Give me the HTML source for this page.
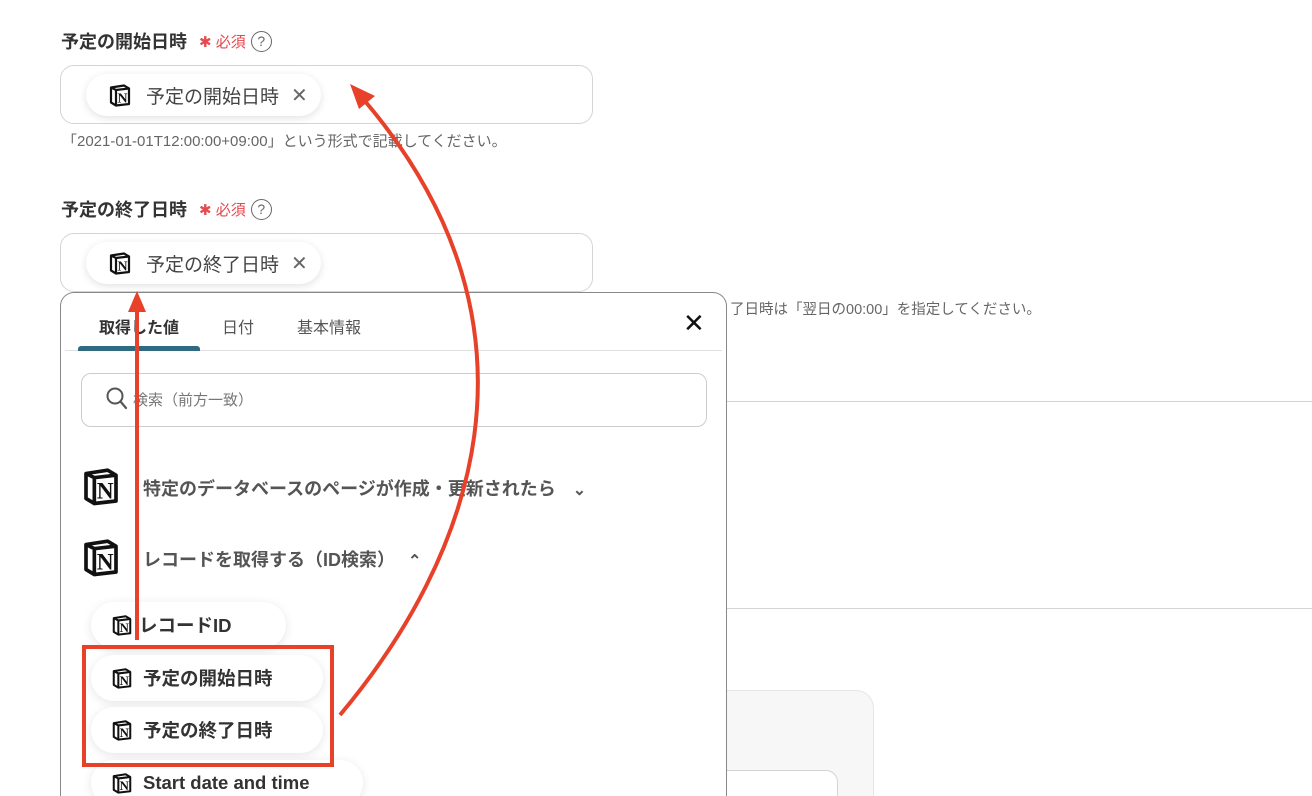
<!DOCTYPE html>
<html><head><meta charset="utf-8"><style>
*{box-sizing:border-box;margin:0;padding:0}
html,body{width:1312px;height:796px;overflow:hidden}
body{background:#fff;font-family:"Liberation Sans","Noto Sans CJK JP",sans-serif;color:#333;position:relative}
.abs{position:absolute}
.lbl{font-size:18px;font-weight:bold;color:#333;display:flex;align-items:center}
.req{color:#e5484d;font-size:15px;font-weight:normal;margin-left:12px}
.q{width:21px;height:21px;border:1.5px solid #666;border-radius:50%;font-size:14px;color:#666;display:inline-flex;align-items:center;justify-content:center;margin-left:5px;font-weight:normal}
.inp{border:1px solid #d4d4d8;border-radius:14px;background:#fff}
.chip{border-radius:22px;background:#fff;box-shadow:0 2px 8px rgba(0,0,0,.12);display:flex;align-items:center;font-size:19px;color:#444}
.help{font-size:15px;color:#666;white-space:nowrap}
.pill{border-radius:24px;background:#fff;box-shadow:0 2px 10px rgba(0,0,0,.10);display:flex;align-items:center;font-size:18.5px;font-weight:bold;color:#333;padding-left:20px}
.x{font-size:20px;color:#666;font-weight:normal}
</style></head><body>
<svg width="0" height="0" style="position:absolute"><defs>
<symbol id="n" viewBox="0 0 24 24"><path d="M3 4.5 L16 2.5 L21 5.5 L21 21 L8 22.5 L3 19.5 Z" fill="#fff" stroke="#111" stroke-width="2.2" stroke-linejoin="round"/><path d="M3 4.5 L8 7 L21 5.5 M8 7 L8 22.5" fill="none" stroke="#111" stroke-width="2.2"/><text x="14.5" y="19.5" font-family="Liberation Serif,serif" font-weight="bold" font-size="14" text-anchor="middle" fill="#111">N</text></symbol>
</defs></svg>

<div class="abs lbl" style="left:61px;top:29px;height:24px">予定の開始日時<span class="req">✱ 必須</span><span class="q">?</span></div>
<div class="abs inp" style="left:60px;top:65px;width:533px;height:59px"></div>
<div class="abs chip" style="left:86px;top:74px;width:235px;height:42px;padding-left:22px"><svg width="24" height="24"><use href="#n"/></svg><span style="margin-left:14px">予定の開始日時</span><span class="x" style="margin-left:12px">✕</span></div>
<div class="abs help" style="left:62px;top:130px">「2021-01-01T12:00:00+09:00」という形式で記載してください。</div>

<div class="abs lbl" style="left:61px;top:197px;height:24px">予定の終了日時<span class="req">✱ 必須</span><span class="q">?</span></div>
<div class="abs inp" style="left:60px;top:233px;width:533px;height:59px"></div>
<div class="abs chip" style="left:86px;top:242px;width:235px;height:42px;padding-left:22px"><svg width="24" height="24"><use href="#n"/></svg><span style="margin-left:14px">予定の終了日時</span><span class="x" style="margin-left:12px">✕</span></div>
<div class="abs help" style="left:730px;top:298px;font-size:14.5px">了日時は「翌日の00:00」を指定してください。</div>

<div class="abs" style="left:726px;top:401px;width:586px;height:1px;background:#d4d4d8"></div>
<div class="abs" style="left:726px;top:608px;width:586px;height:1px;background:#d4d4d8"></div>
<div class="abs" style="left:700px;top:690px;width:174px;height:106px;background:#f7f7f8;border:1px solid #e6e6ea;border-bottom:none;border-radius:18px 18px 0 0"></div>
<div class="abs" style="left:700px;top:770px;width:138px;height:26px;background:#fff;border:1px solid #d4d4d8;border-bottom:none;border-radius:12px 12px 0 0"></div>

<!-- panel -->
<div class="abs" style="left:60px;top:292px;width:667px;height:504px;background:#fff;border:1px solid #888;border-bottom:none;border-radius:14px 14px 0 0;overflow:hidden">
 <div class="abs" style="left:38px;top:21px;font-size:16px;font-weight:bold;color:#333">取得した値</div>
 <div class="abs" style="left:161px;top:21px;font-size:16px;color:#555">日付</div>
 <div class="abs" style="left:236px;top:21px;font-size:16px;color:#555">基本情報</div>
 <div class="abs" style="left:622px;top:16px;font-size:26px;color:#111;line-height:28px">✕</div>
 <div class="abs" style="left:4px;top:57px;width:657px;height:1px;background:#e0e0e0"></div>
 <div class="abs" style="left:17px;top:53px;width:122px;height:5px;background:#2f6a80;border-radius:3px 3px 0 0"></div>
 <div class="abs" style="left:20px;top:80px;width:626px;height:54px;border:1px solid #ccc;border-radius:10px"></div>
 <svg class="abs" style="left:44px;top:93px" width="24" height="26"><circle cx="10" cy="10" r="7.5" fill="none" stroke="#555" stroke-width="2"/><path d="M15.5 15.5 L21 22" stroke="#555" stroke-width="2.2" stroke-linecap="round"/></svg>
 <div class="abs" style="left:72px;top:96px;font-size:15px;color:#777">検索（前方一致）</div>
 <svg class="abs" style="left:20px;top:173px" width="40" height="40" viewBox="0 0 24 24"><use href="#n"/></svg>
 <div class="abs" style="left:82px;top:182px;font-size:18px;font-weight:bold;color:#555">特定のデータベースのページが作成・更新されたら <span style="font-size:16px;margin-left:12px">⌄</span></div>
 <svg class="abs" style="left:20px;top:244px" width="40" height="40" viewBox="0 0 24 24"><use href="#n"/></svg>
 <div class="abs" style="left:82px;top:253px;font-size:18px;font-weight:bold;color:#555">レコードを取得する（ID検索） <span style="font-size:16px;margin-left:8px">⌃</span></div>
 <div class="abs pill" style="left:30px;top:309px;width:195px;height:46px"><svg width="22" height="24"><use href="#n"/></svg><span style="margin-left:6px">レコードID</span></div>
 <div class="abs pill" style="left:30px;top:362px;width:232px;height:46px"><svg width="22" height="24"><use href="#n"/></svg><span style="margin-left:10px">予定の開始日時</span></div>
 <div class="abs pill" style="left:30px;top:414px;width:232px;height:46px"><svg width="22" height="24"><use href="#n"/></svg><span style="margin-left:10px">予定の終了日時</span></div>
 <div class="abs pill" style="left:30px;top:467px;width:272px;height:46px"><svg width="22" height="24"><use href="#n"/></svg><span style="margin-left:10px">Start date and time</span></div>
</div>

<!-- annotations -->
<svg class="abs" style="left:0;top:0" width="1312" height="796">
 <rect x="84" y="647" width="248" height="118" fill="none" stroke="#e8412a" stroke-width="4"/>
 <line x1="137" y1="640" x2="137" y2="310" stroke="#e8412a" stroke-width="4"/>
 <polygon points="137,291 128,312 146,312" fill="#e8412a"/>
 <path d="M340 715 C 470 560, 560 330, 364 100" fill="none" stroke="#e8412a" stroke-width="4"/>
 <polygon points="350,84 375,96 359,109" fill="#e8412a"/>
</svg>
</body></html>
